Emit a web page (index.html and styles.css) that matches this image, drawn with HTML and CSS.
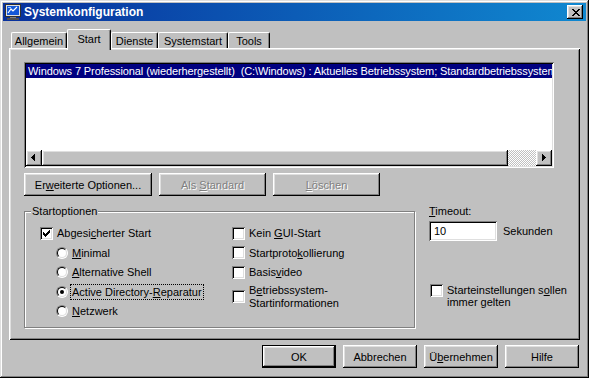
FILE: index.html
```html
<!DOCTYPE html>
<html lang="de">
<head>
<meta charset="utf-8">
<title>Systemkonfiguration</title>
<link rel="stylesheet" href="styles.css">
</head>
<body>
<div class="window">
  <div class="titlebar">
    <svg class="app-icon" width="16" height="16" viewBox="0 0 16 16">
      <rect x="0.5" y="0.5" width="15" height="12" fill="#e0e0e0" stroke="#303030"/>
      <rect x="2" y="2" width="12" height="9" fill="#1458d8"/>
      <path d="M3 9 L6 5 L8 7 L12 3" stroke="#ffffff" stroke-width="1.2" fill="none"/>
      <rect x="3" y="3" width="3" height="1" fill="#9cc8ff"/>
      <rect x="5" y="13" width="6" height="1" fill="#808080"/>
      <rect x="2" y="14" width="12" height="2" fill="#505050"/>
    </svg>
    <span class="title">Systemkonfiguration</span>
    <span class="close-btn raised">
      <svg width="8" height="7" viewBox="0 0 8 7"><path fill="#000" d="M0 0h2v1H0z M6 0h2v1H6z M1 1h2v1H1z M5 1h2v1H5z M2 2h4v1H2z M3 3h2v1H3z M2 4h4v1H2z M1 5h2v1H1z M5 5h2v1H5z M0 6h2v1H0z M6 6h2v1H6z"/></svg>
    </span>
  </div>
  <div class="content">
    <div class="tabs">
      <div class="tab tab-allg"><span>Allgemein</span></div>
      <div class="tab tab-start active"><span>Start</span></div>
      <div class="tab tab-dienste"><span>Dienste</span></div>
      <div class="tab tab-sys"><span>Systemstart</span></div>
      <div class="tab tab-tools"><span>Tools</span></div>
    </div>
    <div class="panel">
      <div class="listbox">
        <div class="list-items">
          <div class="list-item selected">Windows 7 Professional (wiederhergestellt)&nbsp; (C:\Windows) : Aktuelles Betriebssystem; Standardbetriebssystem</div>
        </div>
        <div class="hscroll">
          <span class="sb-btn raised">
            <svg width="16" height="16" viewBox="0 0 16 16"><path fill="#000" d="M5 7h1v1H5z M6 6h1v3H6z M7 5h1v5H7z M8 4h1v7H8z"/></svg>
          </span>
          <span class="thumb raised"></span>
          <span class="track"></span>
          <span class="sb-btn raised">
            <svg width="16" height="16" viewBox="0 0 16 16"><path fill="#000" d="M9 7h1v1H9z M8 6h1v3H8z M7 5h1v5H7z M6 4h1v7H6z"/></svg>
          </span>
        </div>
      </div>
      <div class="btn-row">
        <span class="btn raised btn-wide"><span>Er<u>w</u>eiterte Optionen...</span></span>
        <span class="btn raised btn-mid disabled"><span>Als <u>S</u>tandard</span></span>
        <span class="btn raised btn-mid disabled"><span><u>L</u>öschen</span></span>
      </div>
      <div class="lower">
        <div class="group">
          <span class="group-label">Startoptionen</span>
          <div class="col col-left">
            <div class="opt"><span class="check checked"><svg width="7" height="7" viewBox="0 0 7 7"><path fill="#000" d="M6 0h1v1H6z M5 1h2v1H5z M0 2h1v1H0z M4 2h3v1H4z M0 3h2v1H0z M3 3h3v1H3z M0 4h5v1H0z M1 5h3v1H1z M2 6h1v1H2z"/></svg></span><span>Abgesi<u>c</u>herter Start</span></div>
            <div class="opt sub"><span class="radio"></span><span><u>M</u>inimal</span></div>
            <div class="opt sub"><span class="radio"></span><span><u>A</u>lternative Shell</span></div>
            <div class="opt sub"><span class="radio on"><span class="dot"></span></span><span class="focus">Active Directory-<u>R</u>eparatur</span></div>
            <div class="opt sub"><span class="radio"></span><span><u>N</u>etzwerk</span></div>
          </div>
          <div class="col col-right">
            <div class="opt"><span class="check"></span><span>Kein <u>G</u>UI-Start</span></div>
            <div class="opt"><span class="check"></span><span>Startproto<u>k</u>ollierung</span></div>
            <div class="opt"><span class="check"></span><span>Basis<u>v</u>ideo</span></div>
            <div class="opt multi"><span class="check"></span><span>B<u>e</u>triebssystem-<br>Startinformationen</span></div>
          </div>
        </div>
        <div class="side">
          <div class="timeout-label"><u>T</u>imeout:</div>
          <div class="timeout-row">
            <span class="input">10</span>
            <span class="unit">Sekunden</span>
          </div>
          <div class="side-check"><span class="check"></span><span>Starteinstellungen s<u>o</u>llen<br>immer gelten</span></div>
        </div>
      </div>
    </div>
    <div class="footer">
      <span class="btn default"><span>OK</span></span>
      <span class="btn raised"><span>Abbrechen</span></span>
      <span class="btn raised"><span>Ü<u>b</u>ernehmen</span></span>
      <span class="btn raised"><span>Hilfe</span></span>
    </div>
  </div>
</div>
</body>
</html>
```

FILE: styles.css
```css
* { box-sizing: border-box; }

body {
  margin: 0;
  background: #c0c0c0;
  font-family: "Liberation Sans", Arial, sans-serif;
  font-size: 11px;
  color: #000;
}

u { text-decoration: underline; text-underline-offset: 1px; }

.window {
  width: 589px;
  height: 378px;
  padding: 3px;
  background: #c0c0c0;
  display: flex;
  flex-direction: column;
  box-shadow: inset -1px -1px #000, inset 1px 1px #dfdfdf, inset -2px -2px #808080, inset 2px 2px #fff;
}

.raised {
  background: #c0c0c0;
  box-shadow: inset -1px -1px #000, inset 1px 1px #fff, inset -2px -2px #808080, inset 2px 2px #dfdfdf;
}

/* title bar */
.titlebar {
  height: 18px;
  flex: none;
  display: flex;
  align-items: center;
  padding: 0 3px 0 2px;
  background: linear-gradient(to right, #08309c, #1088d0);
  color: #fff;
}
.app-icon { flex: none; margin-right: 3px; }
.title { flex: 1; font-weight: bold; font-size: 12px; }
.close-btn {
  width: 16px;
  height: 14px;
  display: flex;
  align-items: center;
  justify-content: center;
  padding-left: 1px;
}

/* content */
.content {
  flex: 1;
  display: flex;
  flex-direction: column;
  padding: 0 6px;
}

.tabs {
  height: 19px;
  margin-top: 8px;
  padding-left: 2px;
  display: flex;
  align-items: flex-end;
  flex: none;
}
.tab {
  height: 16px;
  display: flex;
  align-items: center;
  justify-content: center;
  border-top: 1px solid #fff;
  border-left: 1px solid #fff;
  border-right: 1px solid #000;
  border-radius: 2px 2px 0 0;
  box-shadow: inset -1px 0 #808080;
  padding-top: 1px;
  background: #c0c0c0;
  white-space: nowrap;
}
.tab.active {
  height: 21px;
  margin-bottom: -2px;
  padding-bottom: 4px;
  position: relative;
  z-index: 1;
}
.tab-allg { width: 56px; }
.tab-start { width: 44px; }
.tab-dienste { width: 47px; }
.tab-sys { width: 70px; }
.tab-tools { width: 42px; }

.panel {
  height: 292px;
  flex: none;
  padding: 14px 0 0 15px;
  box-shadow: inset 1px 1px #fff, inset -1px -1px #000, inset 2px 2px #dfdfdf, inset -2px -2px #808080;
}

/* listbox */
.listbox {
  width: 530px;
  height: 106px;
  padding: 2px;
  background: #fff;
  display: flex;
  flex-direction: column;
  box-shadow: inset 1px 1px #808080, inset -1px -1px #fff, inset 2px 2px #000, inset -2px -2px #dfdfdf;
}
.list-items { flex: 1; overflow: hidden; }
.list-item {
  height: 14px;
  line-height: 14px;
  padding-left: 2px;
  white-space: nowrap;
  letter-spacing: -0.1px;
}
.list-item.selected { background: #000080; color: #fff; }

.hscroll { height: 16px; flex: none; display: flex; }
.sb-btn { width: 16px; height: 16px; flex: none; display: block; }
.sb-btn svg { display: block; }
.thumb { width: 466px; flex: none; height: 16px; }
.track {
  flex: 1;
  height: 16px;
  background-color: #fff;
  background-image: conic-gradient(#c0c0c0 25%, #fff 0 50%, #c0c0c0 0 75%, #fff 0);
  background-size: 2px 2px;
}

/* buttons */
.btn-row { display: flex; gap: 7px; margin-top: 5px; }
.btn {
  height: 23px;
  display: flex;
  align-items: center;
  justify-content: center;
  white-space: nowrap;
}
.btn-wide { width: 128px; }
.btn-mid { width: 107px; }
.disabled { color: #808080; text-shadow: 1px 1px 0 #fff; }

/* group */
.lower { display: flex; margin-top: 8px; }
.group {
  position: relative;
  width: 391px;
  height: 117px;
  margin-top: 7px;
  padding: 13px 0 0 15px;
  border: 1px solid #808080;
  box-shadow: 1px 1px 0 #fff, inset 1px 1px 0 #fff;
  display: flex;
}
.group-label {
  position: absolute;
  top: -7px;
  left: 6px;
  padding: 0 1px;
  line-height: 13px;
  background: #c0c0c0;
}
.col { display: flex; flex-direction: column; gap: 3.5px; }
.col-left { width: 192px; }

.opt { height: 16px; display: flex; align-items: center; white-space: nowrap; }
.opt.sub { padding-left: 16px; }
.opt.multi { height: auto; line-height: 13px; }

.check {
  width: 13px;
  height: 13px;
  flex: none;
  margin-right: 4px;
  background: #fff;
  display: flex;
  align-items: center;
  justify-content: center;
  box-shadow: inset 1px 1px #808080, inset -1px -1px #fff, inset 2px 2px #000, inset -2px -2px #dfdfdf;
}
.check svg { display: block; }

.radio {
  position: relative;
  width: 12px;
  height: 12px;
  flex: none;
  margin-right: 4px;
  border-radius: 50%;
  border: 1px solid;
  border-color: #808080 #fff #fff #808080;
  background: #dfdfdf;
}
.radio::before {
  content: "";
  position: absolute;
  inset: 0;
  border-radius: 50%;
  border: 1px solid;
  border-color: #000 #dfdfdf #dfdfdf #000;
  background: #fff;
}
.radio .dot {
  position: absolute;
  left: 3px;
  top: 3px;
  width: 4px;
  height: 4px;
  border-radius: 50%;
  background: #000;
  z-index: 1;
}
.focus {
  outline: 1px dotted #000;
  outline-offset: 0;
  padding: 0 1px;
  line-height: 14px;
  margin-left: -1px;
}

/* side */
.side { display: flex; flex-direction: column; margin-left: 14px; }
.timeout-label { line-height: 13px; margin-top: 1px; }
.timeout-row { display: flex; align-items: center; margin-top: 3px; }
.input {
  width: 68px;
  height: 20px;
  padding-left: 5px;
  display: flex;
  align-items: center;
  background: #fff;
  box-shadow: inset 1px 1px #808080, inset -1px -1px #fff, inset 2px 2px #000, inset -2px -2px #dfdfdf;
}
.unit { margin-left: 6px; }
.side-check {
  display: flex;
  align-items: flex-start;
  margin-top: 43px;
  margin-left: 1px;
  line-height: 12px;
}
.side-check .check { margin-right: 4px; }

/* footer */
.footer {
  display: flex;
  justify-content: flex-end;
  gap: 7px;
  margin-top: 5px;
  padding-right: 1px;
}
.footer .btn { width: 74px; }
.btn.default {
  background: #c0c0c0;
  border: 1px solid #000;
  box-shadow: inset -1px -1px #000, inset 1px 1px #fff, inset -2px -2px #808080, inset 2px 2px #dfdfdf;
}
```
